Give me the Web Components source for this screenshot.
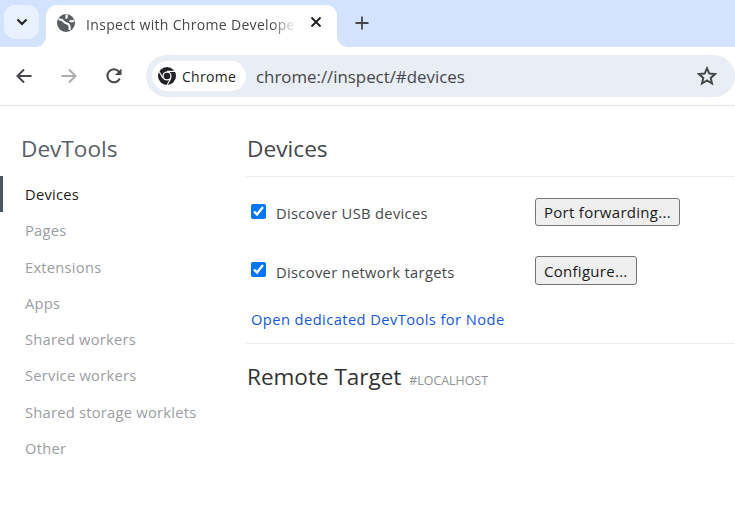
<!doctype html>
<html>
<head>
<meta charset="utf-8">
<title>Inspect with Chrome Developer Tools</title>
<style>
  html, body { margin: 0; height: 100%; background: #fff; overflow: hidden; }
  body { font-family: "Open Sans", "Noto Sans", sans-serif; }
</style>
</head>
<body>
<browser-tabstrip title-text="Inspect with Chrome Developer Tools"></browser-tabstrip>
<browser-toolbar url="chrome://inspect/#devices"></browser-toolbar>
<inspect-page>
  <inspect-sidebar slot="side">
    <nav-item selected>Devices</nav-item>
    <nav-item>Pages</nav-item>
    <nav-item>Extensions</nav-item>
    <nav-item>Apps</nav-item>
    <nav-item>Shared workers</nav-item>
    <nav-item>Service workers</nav-item>
    <nav-item>Shared storage worklets</nav-item>
    <nav-item>Other</nav-item>
  </inspect-sidebar>
  <devices-panel></devices-panel>
</inspect-page>

<script>
  const define = (name, html, init) => {
    customElements.define(name, class extends HTMLElement {
      constructor() {
        super()
        this.attachShadow({ mode: 'open' }).innerHTML = html
        if (init) { init(this) }
      }
    })
  }

  define('browser-tabstrip', `
    <style>
      :host { display: flex; height: 47px; background: #d3e3fd; box-sizing: border-box; padding: 5px 0 0 4px; }
      .search { width: 35px; height: 34px; border-radius: 11px; background: #e9f1fe; display: flex; align-items: center; justify-content: center; }
      .tab { position: relative; margin-left: 7px; width: 291px; height: 42px; box-sizing: border-box; background: #fff; border-radius: 11px 11px 0 0; display: flex; align-items: flex-start; padding: 9px 12px 0 11px; }
      .flare { position: absolute; bottom: 0; width: 10px; height: 10px; background: radial-gradient(circle at var(--cx) 0, #d3e3fd 9.5px, #fff 10px); }
      .flare.l { left: -10px; --cx: 0; }
      .flare.r { right: -10px; --cx: 100%; }
      .title { width: 210px; margin-left: 11px; overflow: hidden; white-space: nowrap; font-size: 14px; line-height: 21px; color: #45474a; letter-spacing: .32px;
        -webkit-mask-image: linear-gradient(90deg, #000 88%, transparent 100%); mask-image: linear-gradient(90deg, #000 88%, transparent 100%); }
      .close { margin-left: 14px; margin-top: 2px; }
      .plus { margin: 11px 0 0 18px; }
      svg { display: block; flex: none; }
    </style>
    <div class="search">
      <svg width="12" height="8" viewBox="0 0 12 8"><path d="M1.5 1.5 6 6l4.5-4.5" fill="none" stroke="#1f1f1f" stroke-width="2"/></svg>
    </div>
    <div class="tab">
      <span class="flare l"></span>
      <svg width="18" height="18" viewBox="0 0 18 18"><circle cx="9" cy="9" r="9" fill="#5a5d61"/><path d="M1.500 5.500C4 5 6 6.500 7.500 8.200c1.500 1.500 3.500 1.300 4.500 2.800.8 1.200 1 2.800.5 5M9.500 .5c.5 1.500.2 3-.5 4M17 6.500c-1.500 1-3 1-4.500.3" fill="none" stroke="#fff" stroke-width="2.200"/></svg>
      <div class="title"></div>
      <svg class="close" width="12" height="12" viewBox="0 0 12 12"><path d="M1.500 1.500l9 9m0-9l-9 9" stroke="#1f1f1f" stroke-width="1.800"/></svg>
      <span class="flare r"></span>
    </div>
    <svg class="plus" width="14" height="14" viewBox="0 0 14 14"><path d="M7 .5v13M.5 7h13" stroke="#45474a" stroke-width="1.800"/></svg>
  `, el => {
    el.shadowRoot.querySelector('.title').textContent = el.getAttribute('title-text')
  })

  define('browser-toolbar', `
    <style>
      :host { display: flex; align-items: center; height: 59px; box-sizing: border-box; background: #fff; border-bottom: 1px solid #e3e3e3; padding: 0 0 0 15px; }
      .btn { width: 18px; height: 18px; flex: none; margin-right: 27px; }
      .btn:nth-of-type(3) { margin-right: 23px; }
      .omni { flex: 1; height: 42px; background: #e9edf6; border-radius: 21px; display: flex; align-items: center; padding-left: 6px; padding-right: 18px; }
      .chip { display: flex; align-items: center; height: 30px; width: 94px; box-sizing: border-box; padding-left: 6px; background: #fff; border-radius: 15px; font-size: 14px; letter-spacing: .3px; color: #1f1f1f; gap: 6px; }
      .url { flex: 1; margin-left: 10px; font-size: 16.850px; color: #45474a; white-space: nowrap; }
      svg { display: block; flex: none; }
    </style>
    <svg class="btn" viewBox="0 0 18 18"><path d="M16.500 9H3M9 2.500 2.500 9 9 15.500" fill="none" stroke="#45474a" stroke-width="2"/></svg>
    <svg class="btn" viewBox="0 0 18 18"><path d="M1.500 9H15M9 2.500 15.500 9 9 15.500" fill="none" stroke="#abadb0" stroke-width="2"/></svg>
    <svg class="btn" viewBox="0 0 18 18"><path d="M14.800 11.500A6.500 6.500 0 1 1 13.900 4.600L15.500 6.200" fill="none" stroke="#45474a" stroke-width="2"/><path d="M16.500 1.500V8H10z" fill="#45474a"/></svg>
    <div class="omni">
      <div class="chip">
        <svg width="18" height="18" viewBox="0 0 18 18"><circle cx="9" cy="9" r="9" fill="#202124"/><circle cx="9" cy="9" r="4.600" fill="#fff"/><circle cx="9" cy="9" r="3.300" fill="#202124"/><path d="M9 4.400h8M5 11.300 1.100 4.500M13 11.300 9 18" stroke="#fff" stroke-width="1.100" fill="none"/></svg>
        <span>Chrome</span>
      </div>
      <div class="url"></div>
      <svg width="20" height="20" viewBox="0 0 20 20"><path d="M10 2.300l2.300 5.300 5.700.5-4.300 3.800 1.300 5.600-5-3-5 3 1.300-5.600L2 8.100l5.700-.5z" fill="none" stroke="#45474a" stroke-width="2" stroke-linejoin="miter"/></svg>
    </div>
  `, el => {
    el.shadowRoot.querySelector('.url').textContent = el.getAttribute('url')
  })

  define('inspect-page', `
    <style>
      :host { display: flex; }
      .side { display: block; width: 246px; flex: none; }
      .main { display: block; flex: 1; min-width: 0; }
    </style>
    <div class="side"><slot name="side"></slot></div>
    <div class="main"><slot></slot></div>
  `)

  define('inspect-sidebar', `
    <style>
      :host { display: block; padding-top: 24px; }
      h1 { margin: 0 0 8px 21px; font-size: 22.600px; font-weight: 400; line-height: 38px; color: #5a6068; }
    </style>
    <h1>DevTools</h1>
    <slot></slot>
  `)

  define('nav-item', `
    <style>
      :host { display: block; height: 36.250px; box-sizing: border-box; padding-left: 25px; font-size: 14.700px; line-height: 36px; letter-spacing: .25px; color: #9b9ea3; }
      :host([selected]) { color: #1c1c1c; border-left: 3px solid #4a5561; padding-left: 22px; }
    </style>
    <slot></slot>
  `)

  define('check-row', `
    <style>
      :host { display: flex; align-items: center; padding-left: 5px; }
      input { width: 15px; height: 15px; margin: 0 10px 2px 0; flex: none; }
      label { width: 259px; flex: none; padding-top: 2px; font-size: 14.700px; color: #46484c; letter-spacing: .33px; white-space: nowrap; }
      button { font: inherit; font-size: 15px; letter-spacing: .28px; color: #1a1a1a; height: 100%; padding: 0 8px; background: #efefef; border: 1px solid #767676; border-radius: 3px; white-space: nowrap; }
    </style>
    <input type="checkbox" id="c" checked>
    <label for="c"><slot></slot></label>
    <button></button>
  `, el => {
    el.shadowRoot.querySelector('button').textContent = el.getAttribute('action')
  })

  define('devices-panel', `
    <style>
      :host { display: block; padding-top: 24px; }
      h2 { margin: 0; padding-left: 1px; font-size: 22.700px; font-weight: 400; line-height: 38px; color: #46484c; border-bottom: 1px solid #eeeeee; height: 47px; box-sizing: border-box; }
      .rows { display: flex; flex-direction: column; gap: 30px; padding-top: 21px; }
      check-row { height: 29px; }
      check-row:first-child { height: 28px; }
      a { display: block; margin: 20px 0 0 5px; font-size: 14.700px; line-height: 28px; letter-spacing: .42px; color: #1558e0; text-decoration: none; }
      hr { border: 0; border-top: 1px solid #eeeeee; margin: 10px 0 0; }
      .remote { display: flex; align-items: baseline; margin: 15px 0 0 1px; font-size: 22.500px; line-height: 36px; color: #333; white-space: nowrap; }
      small { margin-left: 8px; font-size: 12.400px; color: #8f9296; }
    </style>
    <h2>Devices</h2>
    <div class="rows">
      <check-row action="Port forwarding...">Discover USB devices</check-row>
      <check-row action="Configure...">Discover network targets</check-row>
    </div>
    <a href="#">Open dedicated DevTools for Node</a>
    <hr>
    <div class="remote">Remote Target<small>#LOCALHOST</small></div>
  `)
</script>
</body>
</html>
